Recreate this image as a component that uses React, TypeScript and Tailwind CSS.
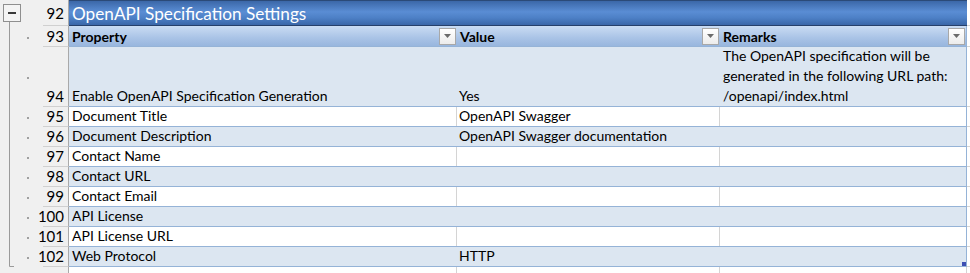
import React from "react";

type Row = {
  n: number;
  property: string;
  value: string;
  remarks?: string[];
  tall?: boolean;
};

const rows: Row[] = [
  {
    n: 94,
    property: "Enable OpenAPI Specification Generation",
    value: "Yes",
    remarks: [
      "The OpenAPI specification will be",
      "generated in the following URL path:",
      "/openapi/index.html",
    ],
    tall: true,
  },
  { n: 95, property: "Document Title", value: "OpenAPI Swagger" },
  { n: 96, property: "Document Description", value: "OpenAPI Swagger documentation" },
  { n: 97, property: "Contact Name", value: "" },
  { n: 98, property: "Contact URL", value: "" },
  { n: 99, property: "Contact Email", value: "" },
  { n: 100, property: "API License", value: "" },
  { n: 101, property: "API License URL", value: "" },
  { n: 102, property: "Web Protocol", value: "HTTP" },
];

const FilterButton = () => (
  <div className="w-[17px] h-[17px] mr-px shrink-0 box-border border border-[#a8a8a8] bg-gradient-to-b from-white to-[#ececec] flex items-center justify-center">
    <svg width="7" height="4" viewBox="0 0 7 4">
      <path d="M0 0h7L3.5 4z" fill="#6b6b6b" />
    </svg>
  </div>
);

const RowHeader = ({ n, className = "" }: { n?: number; className?: string }) => (
  <div
    className={`w-[26px] shrink-0 box-border border-r border-r-[#a9a9a9] border-b border-b-[#d0d0d0] bg-[#f0f0f0] flex items-end justify-end pr-[4px] pb-[1px] text-[15px] leading-[18px] text-black ${className}`}
  >
    {n}
  </div>
);

const Outline = () => (
  <svg width="43" height="273" viewBox="0 0 43 273" className="block">
    <rect x="3.5" y="4.5" width="17" height="17" fill="#f4f4f4" stroke="#8f8f8f" />
    <rect x="8" y="12" width="8" height="2" fill="#3a3a3a" />
    <path d="M9.5 22v244.5H14" fill="none" stroke="#9a9a9a" />
    {[37, 77, 117, 137, 157, 177, 197, 217, 237, 257].map((y) => (
      <rect key={y} x="27" y={y} width="2" height="2" fill="#a0a0a0" />
    ))}
  </svg>
);

export default function App() {
  return (
    <div className="w-[970px] h-[273px] overflow-hidden bg-[#f0f0f0] flex font-[Lato,sans-serif] text-[14px] text-black">
      <div className="w-[43px] shrink-0">
        <Outline />
      </div>

      <div className="flex flex-col flex-1 min-w-0">
        {/* 92: title band */}
        <div className="flex h-[26px]">
          <RowHeader n={92} className="pb-[3px]" />
          <div className="w-[898px] shrink-0 box-border border-t border-t-[#2b4a78] border-b border-b-[#26406a] bg-[linear-gradient(to_bottom,#3b67a8,#5a8dd4_45%,#4d80c6_70%,#3a67a8)] flex items-center pl-[3px] pt-px text-white text-[17.2px] leading-none">
            OpenAPI Specification Settings
          </div>
          <div className="flex-1 bg-white border-b border-[#d4d4d4]" />
        </div>

        {/* 93: header */}
        <div className="flex h-[21px]">
          <RowHeader n={93} />
          <div className="w-[898px] shrink-0 box-border border-b border-b-[#95b3d7] border-r border-r-[#95b3d7] bg-[linear-gradient(to_bottom,#cadcf3,#a9c3e6_60%,#98b6de)] flex items-center font-bold">
            <div className="w-[388px] flex items-center justify-between pl-[3px]">
              <span>Property</span>
              <FilterButton />
            </div>
            <div className="w-[263px] flex items-center justify-between pl-[3px]">
              <span>Value</span>
              <FilterButton />
            </div>
            <div className="flex-1 flex items-center justify-between pl-[3px]">
              <span>Remarks</span>
              <FilterButton />
            </div>
          </div>
          <div className="flex-1 bg-white border-b border-[#d4d4d4]" />
        </div>

        {rows.map((r, i) => {
          const banded = i % 2 === 0;
          const bg = banded ? "bg-[#dce6f1]" : "bg-white";
          const vline = banded ? "border-r-[#dce6f1]" : "border-r-[#d4d4d4]";
          return (
            <div key={r.n} className={`flex ${r.tall ? "h-[60px]" : "h-[20px]"}`}>
              <RowHeader n={r.n} />
              <div
                className={`w-[898px] shrink-0 box-border flex border-b border-b-[#95b3d7] border-r border-r-[#95b3d7] ${bg} leading-[20px]`}
              >
                <div className={`w-[388px] shrink-0 box-border border-r ${vline} flex items-end pl-[3px] whitespace-nowrap`}>
                  {r.property}
                </div>
                <div className={`w-[263px] shrink-0 box-border border-r ${vline} flex items-end pl-[2px] whitespace-nowrap`}>
                  {r.value}
                </div>
                <div className="flex-1 flex flex-col justify-end pl-[3px] whitespace-nowrap">
                  {r.remarks?.map((line) => (
                    <span key={line}>{line}</span>
                  ))}
                </div>
              </div>
              <div className="flex-1 bg-white border-b border-[#d4d4d4]" />
            </div>
          );
        })}

        {/* next row, partly visible */}
        <div className="flex h-[6px] relative">
          <RowHeader className="border-b-0" />
          <div className="w-[388px] shrink-0 box-border bg-white border-r border-r-[#d4d4d4]" />
          <div className="w-[263px] shrink-0 box-border bg-white border-r border-r-[#d4d4d4]" />
          <div className="w-[247px] shrink-0 box-border bg-white border-r border-r-[#d4d4d4]" />
          <div className="flex-1 bg-white" />
          <div className="absolute left-[919px] -top-[5px] w-[4px] h-[4px] bg-[#3d4fb3]" />
        </div>
      </div>
    </div>
  );
}
